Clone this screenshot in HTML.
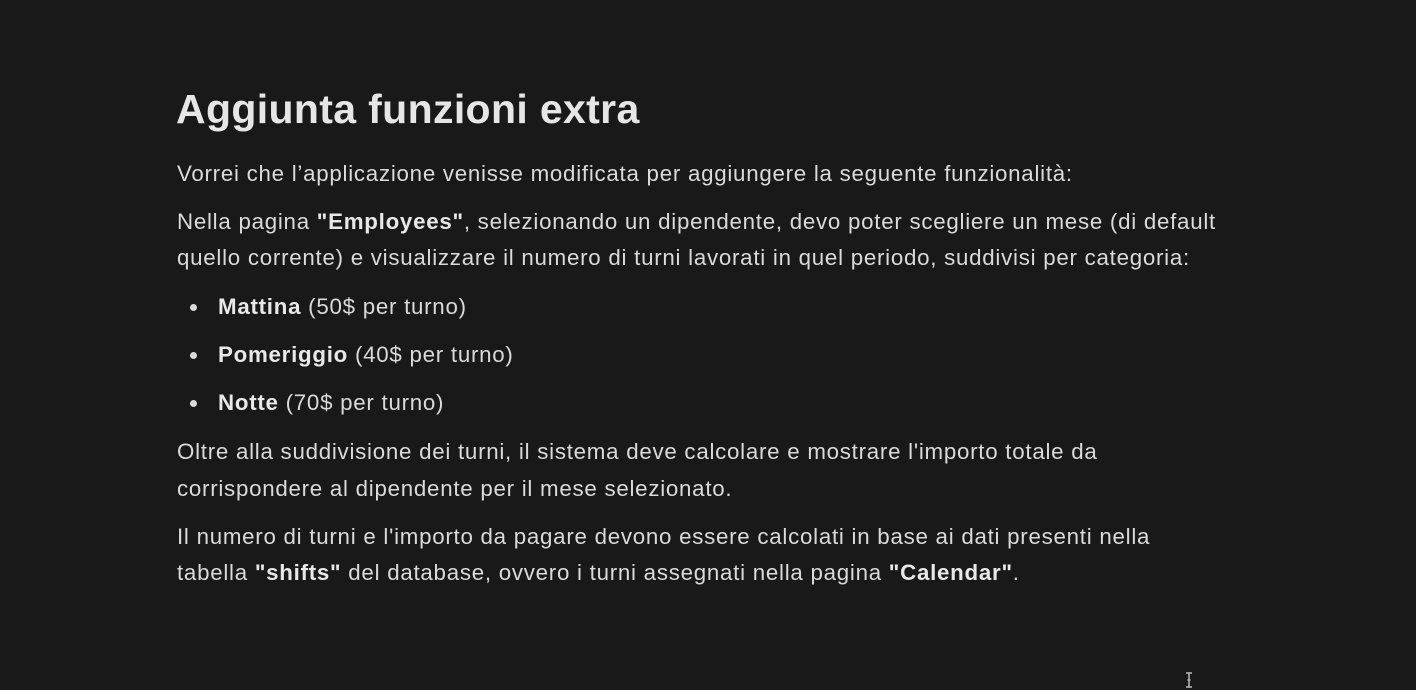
<!DOCTYPE html>
<html><head><meta charset="utf-8"><style>
html,body{margin:0;padding:0;background:#191919;width:1416px;height:690px;overflow:hidden}
body{font-family:"Liberation Sans",sans-serif;color:#dadada;position:relative}
.l{position:absolute;left:177px;font-size:22.3px;line-height:36px;white-space:nowrap;letter-spacing:0.74px}
h1{position:absolute;left:176px;top:84px;margin:0;font-size:41px;line-height:50px;font-weight:bold;color:#e6e6e6;letter-spacing:0.35px}
b{font-weight:bold;color:#e8e8e8}
.li{left:218px}
.dot{position:absolute;left:190px;width:7px;height:7px;border-radius:50%;background:#dadada}
.cur{position:absolute;left:1185px;top:672px;width:8px;height:16px}
</style></head><body>
<h1>Aggiunta funzioni extra</h1>
<div class="l" style="top:156px">Vorrei che l’applicazione venisse modificata per aggiungere la seguente funzionalità:</div>
<div class="l" style="top:204px">Nella pagina <b>"Employees"</b>, selezionando un dipendente, devo poter scegliere un mese (di default</div>
<div class="l" style="top:240px">quello corrente) e visualizzare il numero di turni lavorati in quel periodo, suddivisi per categoria:</div>
<div class="dot" style="top:304px"></div>
<div class="l li" style="top:289px"><b>Mattina</b> (50$ per turno)</div>
<div class="dot" style="top:352px"></div>
<div class="l li" style="top:337px"><b>Pomeriggio</b> (40$ per turno)</div>
<div class="dot" style="top:400px"></div>
<div class="l li" style="top:385px"><b>Notte</b> (70$ per turno)</div>
<div class="l" style="top:434px">Oltre alla suddivisione dei turni, il sistema deve calcolare e mostrare l'importo totale da</div>
<div class="l" style="top:471px">corrispondere al dipendente per il mese selezionato.</div>
<div class="l" style="top:519px">Il numero di turni e l'importo da pagare devono essere calcolati in base ai dati presenti nella</div>
<div class="l" style="top:555px">tabella <b>"shifts"</b> del database, ovvero i turni assegnati nella pagina <b>"Calendar"</b>.</div>
<svg class="cur" viewBox="0 0 8 16"><path d="M1 1h6M4 1v14M1 15h6M2.5 8h3" stroke="#bbb" stroke-width="1.5" fill="none"/></svg>
</body></html>
